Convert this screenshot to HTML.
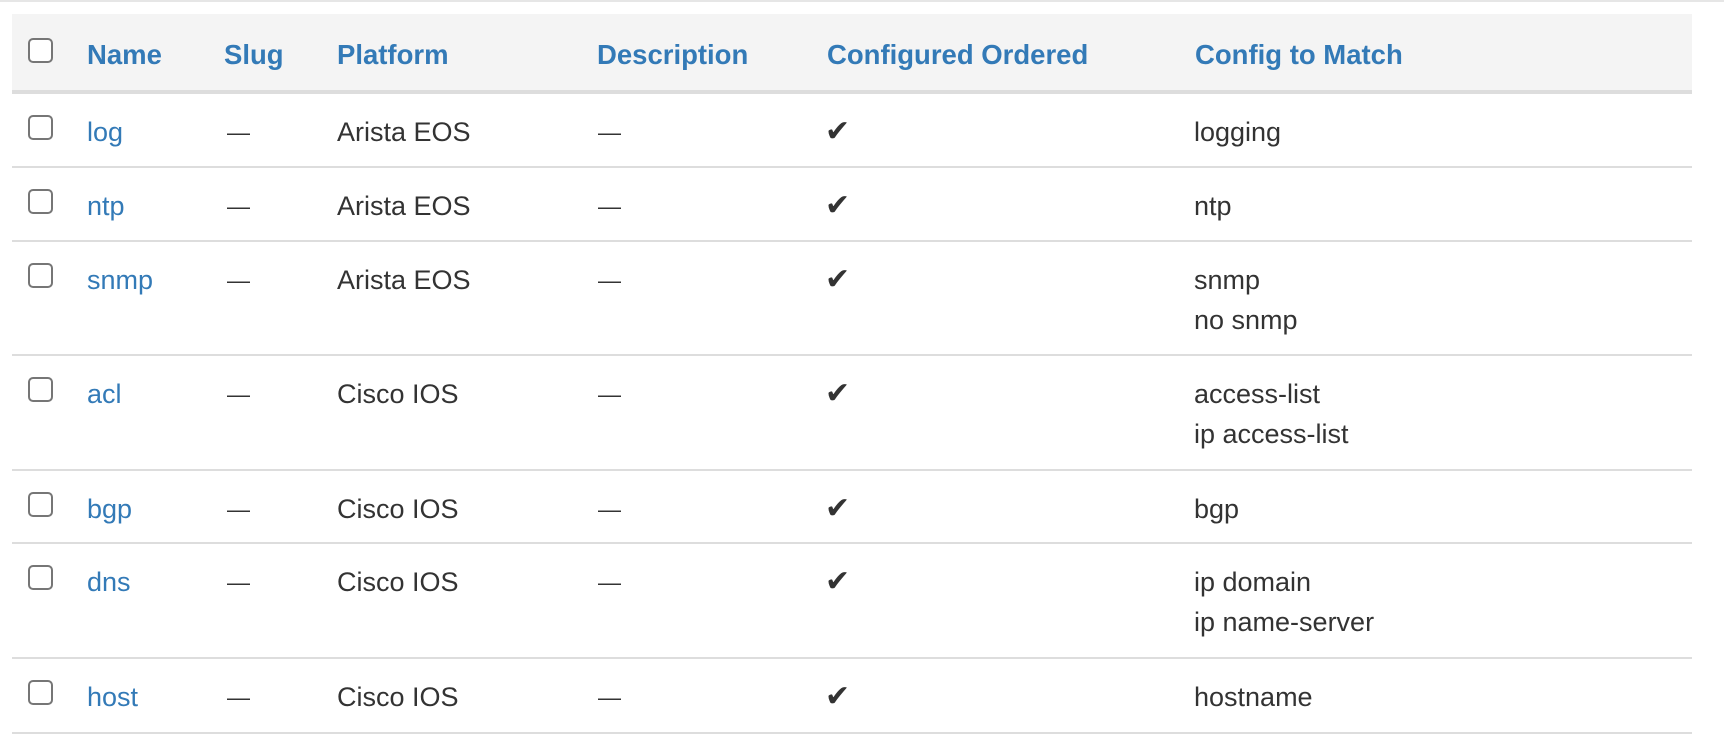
<!DOCTYPE html>
<html><head><meta charset="utf-8"><style>
body{margin:0;width:1724px;height:744px;background:#fff;position:relative;overflow:hidden;font-family:"Liberation Sans",Arial,sans-serif;color:#333;font-size:27px}
.top{position:absolute;left:0;top:0;width:1724px;height:2px;background:#e6e6e6}
.hd{position:absolute;left:12px;top:14px;width:1680px;height:76px;background:#f4f4f4;border-bottom:4px solid #ddd}
.ln{position:absolute;left:12px;width:1680px;height:2px;background:#ddd}
.t{position:absolute;line-height:40px;white-space:nowrap;margin-top:3px}
.h{font-weight:bold;color:#337ab7;font-size:27.5px}
.a{color:#337ab7}
.d{font-size:23px;margin-left:1px}
.cb{position:absolute;left:28px;width:21px;height:21px;border:2px solid #767676;border-radius:5px;background:#fff}
.ck{position:absolute;left:825px;font-family:"DejaVu Sans",sans-serif;font-size:30px;line-height:40px;color:#333;margin-top:2px}
</style></head><body>
<div class="top"></div>
<div class="hd"></div>
<div class="cb" style="top:38px"></div>
<div class="t h" style="left:87px;top:32px">Name</div>
<div class="t h" style="left:224px;top:32px">Slug</div>
<div class="t h" style="left:337px;top:32px">Platform</div>
<div class="t h" style="left:597px;top:32px">Description</div>
<div class="t h" style="left:827px;top:32px">Configured Ordered</div>
<div class="t h" style="left:1195px;top:32px">Config to Match</div>

<div class="ln" style="top:166px"></div>
<div class="ln" style="top:240px"></div>
<div class="ln" style="top:354px"></div>
<div class="ln" style="top:469px"></div>
<div class="ln" style="top:542px"></div>
<div class="ln" style="top:657px"></div>
<div class="ln" style="top:732px"></div>

<div class="cb" style="top:115px"></div><div class="t a" style="left:87px;top:109px">log</div><div class="t d" style="left:226px;top:109px">—</div><div class="t" style="left:337px;top:109px">Arista EOS</div><div class="t d" style="left:597px;top:109px">—</div><div class="ck" style="top:110px">✔</div><div class="t" style="left:1194px;top:109px">logging</div>

<div class="cb" style="top:189px"></div><div class="t a" style="left:87px;top:183px">ntp</div><div class="t d" style="left:226px;top:183px">—</div><div class="t" style="left:337px;top:183px">Arista EOS</div><div class="t d" style="left:597px;top:183px">—</div><div class="ck" style="top:184px">✔</div><div class="t" style="left:1194px;top:183px">ntp</div>

<div class="cb" style="top:263px"></div><div class="t a" style="left:87px;top:257px">snmp</div><div class="t d" style="left:226px;top:257px">—</div><div class="t" style="left:337px;top:257px">Arista EOS</div><div class="t d" style="left:597px;top:257px">—</div><div class="ck" style="top:258px">✔</div><div class="t" style="left:1194px;top:257px">snmp<br>no snmp</div>

<div class="cb" style="top:377px"></div><div class="t a" style="left:87px;top:371px">acl</div><div class="t d" style="left:226px;top:371px">—</div><div class="t" style="left:337px;top:371px">Cisco IOS</div><div class="t d" style="left:597px;top:371px">—</div><div class="ck" style="top:372px">✔</div><div class="t" style="left:1194px;top:371px">access-list<br>ip access-list</div>

<div class="cb" style="top:492px"></div><div class="t a" style="left:87px;top:486px">bgp</div><div class="t d" style="left:226px;top:486px">—</div><div class="t" style="left:337px;top:486px">Cisco IOS</div><div class="t d" style="left:597px;top:486px">—</div><div class="ck" style="top:487px">✔</div><div class="t" style="left:1194px;top:486px">bgp</div>

<div class="cb" style="top:565px"></div><div class="t a" style="left:87px;top:559px">dns</div><div class="t d" style="left:226px;top:559px">—</div><div class="t" style="left:337px;top:559px">Cisco IOS</div><div class="t d" style="left:597px;top:559px">—</div><div class="ck" style="top:560px">✔</div><div class="t" style="left:1194px;top:559px">ip domain<br>ip name-server</div>

<div class="cb" style="top:680px"></div><div class="t a" style="left:87px;top:674px">host</div><div class="t d" style="left:226px;top:674px">—</div><div class="t" style="left:337px;top:674px">Cisco IOS</div><div class="t d" style="left:597px;top:674px">—</div><div class="ck" style="top:675px">✔</div><div class="t" style="left:1194px;top:674px">hostname</div>
</body></html>
